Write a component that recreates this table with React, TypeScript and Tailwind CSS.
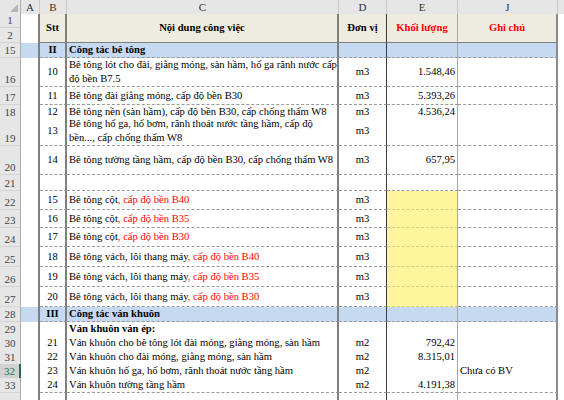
import React from "react";

const GRID = "grid grid-cols-[21px_19px_27px_272px_48px_71px_100px_6px]";
const DASH = "border-b border-b-[#9a9a9a] [border-bottom-style:dashed]";

type Row = {
  n: number;
  h: string;
  stt?: string;
  c?: React.ReactNode;
  d?: string;
  e?: string;
  j?: string;
  blue?: boolean;
  yellow?: boolean;
  bold?: boolean;
  sel?: boolean;
  hideLabel?: boolean;
};

const R = ({ children }: { children: React.ReactNode }) => (
  <span className="text-[#ff0000]">{children}</span>
);

const rows: Row[] = [
  { n: 15, h: "h-[15px]", blue: true, bold: true, stt: "II", c: "Công tác bê tông" },
  {
    n: 16,
    h: "h-[29px]",
    stt: "10",
    c: (
      <>
        Bê tông lót cho đài, giằng móng, sàn hầm, hố ga rãnh nước cấp
        <br />
        độ bền B7.5
      </>
    ),
    d: "m3",
    e: "1.548,46",
  },
  { n: 17, h: "h-[18px]", stt: "11", c: "Bê tông đài giằng móng, cấp độ bền B30", d: "m3", e: "5.393,26" },
  { n: 18, h: "h-[12px]", stt: "12", c: "Bê tông nền (sàn hầm), cấp độ bền B30, cấp chống thấm W8", d: "m3", e: "4.536,24" },
  {
    n: 19,
    h: "h-[29px]",
    stt: "13",
    c: (
      <>
        Bê tông hố ga, hố bơm, rãnh thoát nước tầng hầm, cấp độ
        <br />
        bền..., cấp chống thấm W8
      </>
    ),
    d: "m3",
  },
  { n: 20, h: "h-[29px]", stt: "14", c: "Bê tông tường tầng hầm, cấp độ bền B30, cấp chống thấm W8", d: "m3", e: "657,95" },
  { n: 21, h: "h-[16px]" },
  { n: 22, h: "h-[19px]", stt: "15", c: <>Bê tông cột<R>, cấp độ bền B40</R></>, d: "m3", yellow: true },
  { n: 23, h: "h-[18px]", stt: "16", c: <>Bê tông cột<R>, cấp độ bền B35</R></>, d: "m3", yellow: true },
  { n: 24, h: "h-[19px]", stt: "17", c: <>Bê tông cột<R>, cấp độ bền B30</R></>, d: "m3", yellow: true },
  { n: 25, h: "h-[20px]", stt: "18", c: <>Bê tông vách, lõi thang máy<R>, cấp độ bền B40</R></>, d: "m3", yellow: true },
  { n: 26, h: "h-[20px]", stt: "19", c: <>Bê tông vách, lõi thang máy<R>, cấp độ bền B35</R></>, d: "m3", yellow: true },
  { n: 27, h: "h-[20px]", stt: "20", c: <>Bê tông vách, lõi thang máy<R>, cấp độ bền B30</R></>, d: "m3", yellow: true },
  { n: 28, h: "h-[15px]", blue: true, bold: true, stt: "III", c: "Công tác ván khuôn" },
  { n: 29, h: "h-[14px]", bold: true, c: "Ván khuôn ván ép:" },
  { n: 30, h: "h-[14px]", stt: "21", c: "Ván khuôn cho bê tông lót đài móng, giằng móng, sàn hầm", d: "m2", e: "792,42" },
  { n: 31, h: "h-[14px]", stt: "22", c: "Ván khuôn cho đài móng, giằng móng, sàn hầm", d: "m2", e: "8.315,01" },
  { n: 32, h: "h-[14px]", stt: "23", c: "Ván khuôn hố ga, hố bơm, rãnh thoát nước tầng hầm", d: "m2", j: "Chưa có BV", sel: true },
  { n: 33, h: "h-[15px]", stt: "24", c: "Ván khuôn tường tầng hầm", d: "m2", e: "4.191,38" },
  { n: 34, h: "h-[15px]", hideLabel: true },
];

function DataRow({ r }: { r: Row }) {
  const bg = r.blue ? "bg-[#c5d9f1]" : "bg-white";
  const weight = r.bold ? "font-bold" : "font-normal";
  return (
    <div className={`${GRID} ${r.h}`}>
      <div
        className={
          r.sel
            ? "flex items-end justify-center border-r-2 border-r-[#217346] border-b border-b-[#c8c8c8] bg-[#d2d2d2] text-[11px] text-[#217346]"
            : "flex items-end justify-center border-r border-r-[#ababab] border-b border-b-[#d4d4d4] bg-[#e6e6e6] text-[11px] text-[#444]"
        }
      >
        {!r.hideLabel && <span className="leading-[13px]">{r.n}</span>}
      </div>
      <div className={`border-r-2 border-r-[#7f7f7f] ${bg}`} />
      <div className={`flex items-center justify-center border-r-2 border-r-[#7f7f7f] ${DASH} ${bg} ${weight}`}>
        {r.stt}
      </div>
      <div className={`flex items-center whitespace-nowrap pl-[2px] border-r-2 border-r-[#7f7f7f] ${DASH} ${bg} ${weight}`}>
        <div>{r.c}</div>
      </div>
      <div className={`flex items-center justify-center border-r border-r-[#3a3a3a] ${DASH} ${bg}`}>{r.d}</div>
      <div
        className={
          r.yellow
            ? "flex items-center justify-end pr-[2px] border-r border-r-[#a6a6a6] border-b border-b-[#d9cf7a] [border-bottom-style:dashed] bg-[#fff59c]"
            : `flex items-center justify-end pr-[2px] border-r border-r-[#a6a6a6] ${DASH} ${bg}`
        }
      >
        {r.e}
      </div>
      <div className={`flex items-center whitespace-nowrap pl-[2px] border-r-2 border-r-[#8c8c8c] ${DASH} ${bg}`}>{r.j}</div>
      <div className="bg-white" />
    </div>
  );
}

export default function App() {
  const colHead = "flex items-center justify-center border-r border-r-[#c8c8c8] border-b border-b-[#ababab] bg-[#e6e6e6] text-[11px] text-[#333]";
  return (
    <div className="h-[400px] w-[564px] overflow-hidden bg-white [font-family:Liberation_Serif,Times_New_Roman,serif] text-[10.6px] leading-[14px] text-black">
      {/* column letters */}
      <div className={`${GRID} h-[14px]`}>
        <div className="flex items-end justify-end border-r border-r-[#ababab] border-b border-b-[#ababab] bg-[#e6e6e6] p-[2px]">
          <svg width="8" height="8" viewBox="0 0 8 8">
            <polygon points="8,0 8,8 0,8" fill="#b5b5b5" />
          </svg>
        </div>
        <div className={colHead}>A</div>
        <div className={colHead}>B</div>
        <div className={colHead}>C</div>
        <div className={colHead}>D</div>
        <div className={colHead}>E</div>
        <div className={colHead}>J</div>
        <div className="border-b border-b-[#ababab] bg-[#e6e6e6]" />
      </div>
      {/* header rows 1-2 */}
      <div className={`${GRID} h-[29px]`}>
        <div className="flex flex-col border-r border-r-[#ababab] bg-[#e6e6e6] text-[11px] text-[#444]">
          <div className="flex h-[14px] items-end justify-center border-b border-b-[#d4d4d4]">
            <span className="leading-[13px]">1</span>
          </div>
          <div className="flex h-[15px] items-end justify-center border-b border-b-[#d4d4d4]">
            <span className="leading-[13px]">2</span>
          </div>
        </div>
        <div className="border-r-2 border-r-[#7f7f7f] bg-white" />
        <div className="flex items-center justify-center border-r-2 border-r-[#7f7f7f] border-b border-b-[#7f7f7f] bg-[#eeece1] font-bold">
          Stt
        </div>
        <div className="flex items-center justify-center border-r-2 border-r-[#7f7f7f] border-b border-b-[#7f7f7f] bg-[#eeece1] font-bold">
          Nội dung công việc
        </div>
        <div className="flex items-center justify-center border-r border-r-[#3a3a3a] border-b border-b-[#7f7f7f] bg-[#eeece1] font-bold">
          Đơn vị
        </div>
        <div className="flex items-center justify-center border-r border-r-[#a6a6a6] border-b border-b-[#7f7f7f] bg-[#eeece1] font-bold text-[#ff0000]">
          Khối lượng
        </div>
        <div className="flex items-center justify-center border-r-2 border-r-[#8c8c8c] border-b border-b-[#7f7f7f] bg-[#eeece1] font-bold text-[#ff0000]">
          Ghi chú
        </div>
        <div className="bg-white" />
      </div>
      {rows.map((r) => (
        <DataRow key={r.n} r={r} />
      ))}
    </div>
  );
}
